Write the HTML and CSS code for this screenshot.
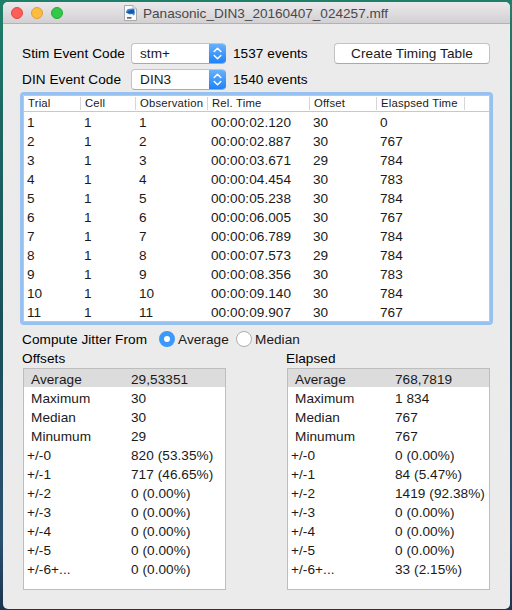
FILE: index.html
```html
<!DOCTYPE html>
<html lang="en">
<head>
<meta charset="utf-8">
<title>Panasonic_DIN3_20160407_024257.mff</title>
<link rel="stylesheet" href="styles.css">
</head>
<body>
<main class="window">
  <header class="titlebar">
    <div class="lights"><i class="light close"></i><i class="light minimize"></i><i class="light zoom"></i></div>
    <svg class="doc-icon" width="13" height="16" viewBox="0 0 13 16">
      <path d="M.5.5H9L12.500 4V15.500H.5Z" fill="#fbfbfb" stroke="#a9a9a9"/>
      <path d="M9 .5V4h3.500" fill="#ddd" stroke="#a9a9a9" stroke-width=".8"/>
      <path d="M2.500 5.500 4 4 8.500 3.500 10.500 4.500 10.800 9 9.800 10.500 8 9 5.500 9.500 2 7.500Z" fill="#3d8ad6"/>
      <path d="M2 7.500 5.500 5.500 9.500 4.500 10.500 7.500 7.500 8.800Z" fill="#1258a8"/>
      <path d="M3 12.800h4.500" stroke="#333" stroke-width="1.300"/>
    </svg>
    <h1 class="title">Panasonic_DIN3_20160407_024257.mff</h1>
  </header>

  <section class="controls">
    <div class="control-row">
      <span class="label stim">Stim Event Code</span>
      <div class="select"><span>stm+</span><svg class="arrows" width="17" height="20" viewBox="0 0 17 20"><path d="M5.200 8 8.500 4.800 11.800 8M5.200 12 8.500 15.200 11.800 12"/></svg></div>
      <span class="count">1537 events</span>
      <button class="button">Create Timing Table</button>
    </div>
    <div class="control-row">
      <span class="label din">DIN Event Code</span>
      <div class="select"><span>DIN3</span><svg class="arrows" width="17" height="20" viewBox="0 0 17 20"><path d="M5.200 8 8.500 4.800 11.800 8M5.200 12 8.500 15.200 11.800 12"/></svg></div>
      <span class="count">1540 events</span>
    </div>
  </section>

  <section class="events">
    <div class="row head"><span>Trial</span><span>Cell</span><span>Observation</span><span>Rel. Time</span><span>Offset</span><span>Elaspsed Time</span></div>
    <div class="row"><span>1</span><span>1</span><span>1</span><span>00:00:02.120</span><span>30</span><span>0</span></div>
    <div class="row"><span>2</span><span>1</span><span>2</span><span>00:00:02.887</span><span>30</span><span>767</span></div>
    <div class="row"><span>3</span><span>1</span><span>3</span><span>00:00:03.671</span><span>29</span><span>784</span></div>
    <div class="row"><span>4</span><span>1</span><span>4</span><span>00:00:04.454</span><span>30</span><span>783</span></div>
    <div class="row"><span>5</span><span>1</span><span>5</span><span>00:00:05.238</span><span>30</span><span>784</span></div>
    <div class="row"><span>6</span><span>1</span><span>6</span><span>00:00:06.005</span><span>30</span><span>767</span></div>
    <div class="row"><span>7</span><span>1</span><span>7</span><span>00:00:06.789</span><span>30</span><span>784</span></div>
    <div class="row"><span>8</span><span>1</span><span>8</span><span>00:00:07.573</span><span>29</span><span>784</span></div>
    <div class="row"><span>9</span><span>1</span><span>9</span><span>00:00:08.356</span><span>30</span><span>783</span></div>
    <div class="row"><span>10</span><span>1</span><span>10</span><span>00:00:09.140</span><span>30</span><span>784</span></div>
    <div class="row"><span>11</span><span>1</span><span>11</span><span>00:00:09.907</span><span>30</span><span>767</span></div>
  </section>

  <section class="jitter">
    <span class="jitter-label">Compute Jitter From</span>
    <i class="radio on"></i><span class="choice average">Average</span>
    <i class="radio"></i><span class="choice">Median</span>
  </section>

  <section class="stats">
    <div class="stat">
      <h2>Offsets</h2>
      <dl>
        <div class="named selected"><dt>Average</dt><dd>29,53351</dd></div>
        <div class="named"><dt>Maximum</dt><dd>30</dd></div>
        <div class="named"><dt>Median</dt><dd>30</dd></div>
        <div class="named"><dt>Minumum</dt><dd>29</dd></div>
        <div><dt>+/-0</dt><dd>820 (53.35%)</dd></div>
        <div><dt>+/-1</dt><dd>717 (46.65%)</dd></div>
        <div><dt>+/-2</dt><dd>0 (0.00%)</dd></div>
        <div><dt>+/-3</dt><dd>0 (0.00%)</dd></div>
        <div><dt>+/-4</dt><dd>0 (0.00%)</dd></div>
        <div><dt>+/-5</dt><dd>0 (0.00%)</dd></div>
        <div><dt>+/-6+...</dt><dd>0 (0.00%)</dd></div>
      </dl>
    </div>
    <div class="stat">
      <h2>Elapsed</h2>
      <dl>
        <div class="named selected"><dt>Average</dt><dd>768,7819</dd></div>
        <div class="named"><dt>Maximum</dt><dd>1 834</dd></div>
        <div class="named"><dt>Median</dt><dd>767</dd></div>
        <div class="named"><dt>Minumum</dt><dd>767</dd></div>
        <div><dt>+/-0</dt><dd>0 (0.00%)</dd></div>
        <div><dt>+/-1</dt><dd>84 (5.47%)</dd></div>
        <div><dt>+/-2</dt><dd>1419 (92.38%)</dd></div>
        <div><dt>+/-3</dt><dd>0 (0.00%)</dd></div>
        <div><dt>+/-4</dt><dd>0 (0.00%)</dd></div>
        <div><dt>+/-5</dt><dd>0 (0.00%)</dd></div>
        <div><dt>+/-6+...</dt><dd>33 (2.15%)</dd></div>
      </dl>
    </div>
  </section>
</main>
</body>
</html>
```
FILE: styles.css
```css
* { box-sizing: border-box; }

body {
  margin: 0;
  height: 610px;
  padding: 2px 2px 1px 3px;
  overflow: hidden;
  background: linear-gradient(#1f8069, #1d6561 20%, #194f59 55%, #2a5070 88%, #1c344e);
  font: 13.6px/19px "Liberation Sans", Arial, sans-serif;
  letter-spacing: .06px;
  color: #1a1a1a;
}

.window {
  height: 607px;
  background: #ebebeb;
  border-radius: 5px;
  overflow: hidden;
}

.titlebar {
  display: flex;
  align-items: center;
  height: 22px;
  background: linear-gradient(#ebe9eb, #d2d0d2);
  border-bottom: 1px solid #b3b1b3;
}

.lights { display: flex; gap: 8px; padding-left: 8px; }
.light { width: 12px; height: 12px; border-radius: 50%; }
.close { background: #fd5e59; border: 1px solid #e2463f; }
.minimize { background: #fdbb40; border: 1px solid #dfa033; }
.zoom { background: #33c848; border: 1px solid #26aa35; }

.doc-icon { margin-left: 61px; }
.title {
  margin: 1px 0 0 6px;
  font-size: 13.6px;
  font-weight: 400;
  letter-spacing: -.01px;
  color: #4a494a;
  white-space: nowrap;
}

.controls { padding: 18px 20px 0 19px; color: #000; }
.control-row { display: flex; align-items: center; height: 22px; }
.control-row + .control-row { margin-top: 4px; }
.label { width: 109px; white-space: nowrap; }

.select {
  display: flex;
  justify-content: space-between;
  width: 95px;
  height: 21px;
  padding-left: 8px;
  border: 1px solid #c3c3c3;
  border-bottom-color: #a9a9a9;
  border-right: 0;
  border-radius: 4px;
  background: #fff;
  color: #1a1a1a;
  overflow: hidden;
}
.arrows { margin-top: -1px; height: 21px; background: linear-gradient(#6cb3fa, #1a80fb); }
.arrows path { fill: none; stroke: #fff; stroke-width: 1.5; stroke-linecap: round; stroke-linejoin: round; }
.count { margin-left: 7px; white-space: nowrap; }
.button {
  width: 156px;
  height: 21px;
  margin-left: auto;
  padding: 0;
  border: 1px solid #c3c3c3;
  border-bottom-color: #a9a9a9;
  border-radius: 4px;
  background: #fff;
  font: inherit;
  letter-spacing: inherit;
  color: #1a1a1a;
}

.events {
  width: 473px;
  height: 233px;
  margin: 2px 0 0 17px;
  border: 3px solid #96c1f1;
  border-radius: 4px;
  background: #fff;
  box-shadow: inset 0 0 0 1px #c3c7cc;
}
.row {
  display: grid;
  grid-template-columns: 57px 55px 72px 102px 67px 88px;
  height: 19px;
  padding-left: 1px;
  white-space: nowrap;
}
.row span { padding-left: 3px; }
.head {
  height: 17px;
  margin: 0 1px 1px;
  padding-left: 0;
  border-bottom: 1px solid #c8c8c8;
  font-size: 11.3px;
  letter-spacing: .2px;
  line-height: 17px;
}
.head span { padding-left: 4px; margin: 2px 0; line-height: 13px; border-right: 1px solid #d6d6d6; }

.jitter { display: flex; align-items: center; height: 18px; margin: 5px 0 0 19px; white-space: nowrap; }
.jitter-label { width: 137px; color: #000; }
.radio { width: 16px; height: 16px; border: 1px solid #adadad; border-radius: 50%; background: #fff; }
.radio.on { border: 5px solid #3b99fc; }
.choice { margin-left: 3px; }
.average { width: 58px; }

.stats { display: flex; gap: 61px; margin: 1px 0 0 20px; }
.stat { width: 203px; }
.stat h2 { margin: 0 0 0 -1px; height: 19px; font-size: 13.6px; font-weight: 400; color: #000; }
.stat dl { margin: 0; height: 222px; border: 1px solid #bebebe; background: #fff; }
.stat dl div { display: flex; height: 19px; padding-left: 3px; line-height: 21px; white-space: nowrap; }
.stat dt { width: 104px; }
.stat .named dt { padding-left: 4px; }
.stat dd { margin: 0; }
.stat dl .selected { height: 18px; margin-bottom: 1px; background: #dcdcdc; }
```
